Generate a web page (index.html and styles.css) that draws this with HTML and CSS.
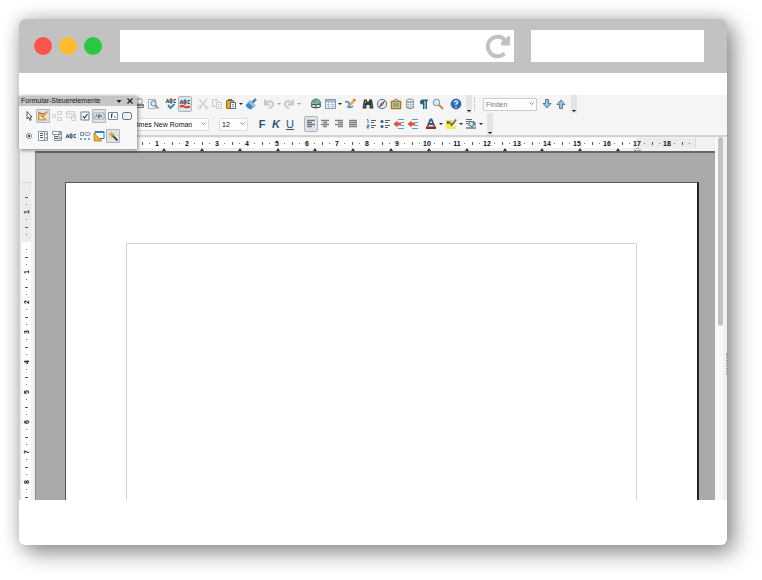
FILE: index.html
```html
<!DOCTYPE html>
<html lang="de">

<head>
    <meta charset="UTF-8">
    <meta name="viewport" content="width=device-width, initial-scale=1.0">
    <title>Formular-Steuerelemente</title>
    <link rel="stylesheet" href="styles.css">
</head>

<body>
    <div class="window">
        <header class="titlebar">
            <span class="light red"></span>
            <span class="light yellow"></span>
            <span class="light green"></span>
            <div class="address">
                <input type="text" class="address-input" aria-label="Adresse">
                <button class="reload" aria-label="Neu laden">
                    <svg width="26" height="26" viewBox="0 0 26 26"><path d="M19.600 20.400A9.800 9.800 0 1 1 19.500 6.500" fill="none" stroke="#c2c2c2" stroke-width="4"/><path d="M24.500 3.500V12H16.500V9L21 6L23 3.500Z" fill="#c2c2c2" stroke="#c2c2c2"/></svg>
                </button>
            </div>
            <input type="text" class="search-input" aria-label="Suche">
        </header>

        <main class="editor">
            <!-- standard toolbar -->
            <div class="toolbar standard">
                <button class="tool" aria-label="Drucken"><svg viewBox="0 0 12 12"><path d="M3 1h6v5H3z" fill="#fff" stroke="#999"/><path d="M1 6h10v4H1z" fill="#75838c"/><path d="M2 8h8v1H2z" fill="#cfe0ea"/><path d="M8 9h2v1H8z" fill="#4b9b58"/></svg></button>
                <button class="tool" aria-label="Seitenansicht"><svg viewBox="0 0 12 12"><path d="M1.500 1.500h7v9h-7z" fill="#fff" stroke="#a6adb3"/><circle cx="6.500" cy="5.500" r="2.700" fill="#d3e7f7" stroke="#4e7fa8"/><path d="M8.500 7.500l3 3" stroke="#b77b2b" stroke-width="1.500"/></svg></button>
                <span class="sep"></span>
                <button class="tool" aria-label="Rechtschreibung"><svg viewBox="0 0 12 12"><path d="M1 5l1.500-4L4 5M1.500 3.700h2M5 1v4h2V1H5m0 2h2M11 1.500H9v3h2" fill="none" stroke="#333e48" stroke-width=".9"/><path d="M3 7l2.500 3L9.500 6" fill="none" stroke="#3a85bb" stroke-width="2"/></svg></button>
                <button class="tool active" aria-label="Automatische Rechtschreibprüfung"><svg viewBox="0 0 12 12"><path d="M1 6l1.500-4L4 6M1.500 4.700h2M5 2v4h2V2H5m0 2h2M11 2.500H9v3h2" fill="none" stroke="#333e48" stroke-width=".9"/><path d="M1 9q2-2 4-.5t6 0" fill="none" stroke="#e03a28" stroke-width="2"/></svg></button>
                <span class="sep"></span>
                <button class="tool faded" aria-label="Ausschneiden"><svg viewBox="0 0 12 12"><path d="M2 1l7 8M10 1L3 9" stroke="#999" stroke-width="1.300"/><circle cx="2.500" cy="9.500" r="1.500" fill="none" stroke="#888"/><circle cx="9.500" cy="9.500" r="1.500" fill="none" stroke="#888"/></svg></button>
                <button class="tool faded" aria-label="Kopieren"><svg viewBox="0 0 12 12"><path d="M1.500 1.500h5v7h-5z" fill="#eee" stroke="#888"/><path d="M5.500 4.500h5v6h-5z" fill="#fff" stroke="#888"/><path d="M7 6.500h2M7 8.500h2" stroke="#888"/></svg></button>
                <button class="tool" aria-label="Einfügen"><svg viewBox="0 0 12 12"><path d="M1.500 2.500h7v8h-7z" fill="#e6a334" stroke="#a86d16"/><path d="M3 1h4v2H3z" fill="#626a70"/><path d="M5.500 4.500h5v6h-5z" fill="#fff" stroke="#536a7c"/><path d="M7 6.500h2M7 8.500h2" stroke="#7895a9"/></svg></button>
                <span class="drop"></span>
                <button class="tool" aria-label="Format übertragen"><svg viewBox="0 0 12 12"><path d="M11 1L7.500 4.500" stroke="#4682ae" stroke-width="2.500"/><path d="M5 2.500l5 5-2 2-5-5z" fill="#9fc7e2" stroke="#3972a3" stroke-width=".6"/><path d="M3.500 4.500l4.500 4.500-2 2.500Q2 10.500 .5 7z" fill="#3b8cc5"/></svg></button>
                <span class="sep"></span>
                <button class="tool faded" aria-label="Rückgängig"><svg viewBox="0 0 12 12"><path d="M2 1.500v5h5M2.500 6q2-3.500 6-2.500 3 2 .5 5l-3 2" fill="none" stroke="#888" stroke-width="2"/></svg></button>
                <span class="drop faded"></span>
                <button class="tool faded" aria-label="Wiederherstellen"><svg viewBox="0 0 12 12"><path d="M10 1.500v5H5M9.500 6q-2-3.500-6-2.500-3 2-.5 5l3 2" fill="none" stroke="#888" stroke-width="2"/></svg></button>
                <span class="drop faded"></span>
                <span class="sep wide"></span>
                <button class="tool" aria-label="Hyperlink"><svg viewBox="0 0 12 12"><circle cx="6" cy="5.500" r="4.500" fill="#8bbadb" stroke="#44687f"/><path d="M3 3l3-1.500 1 2-2 2-3-1zM7 4l3 0v3L8 8z" fill="#6da35b"/><rect x="1.500" y="6.500" width="5" height="3" rx="1.500" fill="#ddd" stroke="#48565e"/><rect x="5.500" y="6.500" width="5" height="3" rx="1.500" fill="#ddd" stroke="#48565e"/></svg></button>
                <button class="tool" aria-label="Tabelle"><svg viewBox="0 0 12 12"><path d="M1.500 1.500h10v9h-10z" fill="#fff" stroke="#8197a7"/><path d="M2 2h9v2H2z" fill="#a9bdcc"/><path d="M1 4.500h10M1 6.500h10M1 8.500h10M4.500 2v8M8.500 2v8" stroke="#a4b4c0" stroke-width=".7"/></svg></button>
                <span class="drop"></span>
                <button class="tool" aria-label="Zeichnen"><svg viewBox="0 0 12 12"><path d="M1 4q3-1 4 1t-1 4q3 1 5-1" fill="none" stroke="#4b91c5" stroke-width="1.700"/><path d="M10.500 2L6 7" stroke="#efa73a" stroke-width="2.500"/><path d="M11.500 2.500L9.500 1" stroke="#c44b37" stroke-width="1.500"/></svg></button>
                <span class="sep"></span>
                <button class="tool" aria-label="Suchen"><svg viewBox="0 0 12 12"><path d="M2 1.500h3v2h2v-2h3l1.500 9h-4V7h-3v3.500h-4z" fill="#343a3f"/><path d="M2 8h1M9 8h1M3.500 3v2" stroke="#9aa5ad"/></svg></button>
                <button class="tool" aria-label="Navigator"><svg viewBox="0 0 12 12"><circle cx="6" cy="6" r="4.600" fill="#e4eef6" stroke="#4c7292"/><path d="M9.500 2L7 7 5 5z" fill="#dc432e"/><path d="M2.500 10L5 5l2 2z" fill="#3c6285"/></svg></button>
                <button class="tool" aria-label="Galerie"><svg viewBox="0 0 12 12"><path d="M3 3l3-2 3 2" fill="none" stroke="#777"/><path d="M1.500 3.500h9v7h-9z" fill="#f2d98a" stroke="#b97320" stroke-width="1.500"/><path d="M3 5h6v4H3z" fill="#6fae9b"/></svg></button>
                <button class="tool" aria-label="Datenquellen"><svg viewBox="0 0 12 12"><path d="M2.500 2.500v7q3.500 2.500 7 0v-7z" fill="#bac0c4" stroke="#858d93"/><ellipse cx="6" cy="2.500" rx="3.500" ry="1.500" fill="#edf0f2" stroke="#858d93"/><path d="M2.500 5q3.500 2 7 0m-7 2.500q3.500 2 7 0" fill="none" stroke="#fff" stroke-width=".7"/></svg></button>
                <button class="tool" aria-label="Steuerzeichen"><svg viewBox="0 0 12 12"><path d="M4.500 6.500a2.500 2.500 0 0 1 0-5H10V3H9v8H7.500V3H6.500v8H5V6.500z" fill="#285e7e"/></svg></button>
                <button class="tool" aria-label="Maßstab"><svg viewBox="0 0 12 12"><circle cx="4.500" cy="4.500" r="3.300" fill="#d5e9f5" stroke="#6b93ad"/><path d="M7 7l4 4" stroke="#c28a42" stroke-width="2"/></svg></button>
                <span class="sep"></span>
                <button class="tool" aria-label="Hilfe"><svg viewBox="0 0 12 12"><circle cx="6" cy="6" r="5" fill="#286eb6" stroke="#1c5590" stroke-width=".6"/><path d="M4.300 4.500q0-1.700 1.700-1.700t1.700 1.500Q7.700 5.300 6 6v1M6 8.200v1.200" fill="none" stroke="#fff" stroke-width="1.300"/></svg></button>
                <span class="overflow"></span>
                <span class="grip"></span>
                <select class="combo find" aria-label="Suchtext"><option>Finden</option></select>
                <button class="tool next" aria-label="Weitersuchen"><svg viewBox="0 0 12 12"><path d="M4.500 1.500h3v4h2.500L6 10 2 5.500h2.500z" fill="#9bc1df" stroke="#42749b" stroke-width=".9"/></svg></button>
                <button class="tool" aria-label="Rückwärts suchen"><svg viewBox="0 0 12 12"><path d="M4.500 10.500h3v-4h2.500L6 2 2 6.500h2.500z" fill="#9bc1df" stroke="#42749b" stroke-width=".9"/></svg></button>
                <span class="overflow"></span>
            </div>

            <!-- formatting toolbar -->
            <div class="toolbar formatting">
                <select class="combo font-name" aria-label="Schriftart"><option>Times New Roman</option></select>
                <select class="combo font-size" aria-label="Schriftgröße"><option>12</option></select>
                <span class="sep"></span>
                <button class="tool letter bold">F</button>
                <button class="tool letter italic">K</button>
                <button class="tool letter underline">U</button>
                <span class="sep wide"></span>
                <button class="tool active" aria-label="Linksbündig"><svg viewBox="0 0 12 12"><path d="M2 2.500h8M2 4.500h5M2 6.500h8M2 8.500h5" stroke="#717b83" stroke-width="1.300"/></svg></button>
                <button class="tool" aria-label="Zentriert"><svg viewBox="0 0 12 12"><path d="M2 2.500h8M4 4.500h4M2 6.500h8M4 8.500h4" stroke="#7b838a" stroke-width="1.300"/></svg></button>
                <button class="tool" aria-label="Rechtsbündig"><svg viewBox="0 0 12 12"><path d="M2 2.500h8M5 4.500h5M2 6.500h8M5 8.500h5" stroke="#7b838a" stroke-width="1.300"/></svg></button>
                <button class="tool" aria-label="Blocksatz"><svg viewBox="0 0 12 12"><path d="M2 2.500h8M2 4.500h8M2 6.500h8M2 8.500h8" stroke="#7b838a" stroke-width="1.300"/></svg></button>
                <button class="tool list" aria-label="Nummerierung"><svg viewBox="0 0 12 12"><path d="M2 1.500h1V5M2 7h2v1.500H2V10h2" fill="none" stroke="#3e7197"/><path d="M6 2.500h5M6 4.500h3M6 7.500h5M6 9.500h3" stroke="#59636b"/></svg></button>
                <button class="tool" aria-label="Aufzählung"><svg viewBox="0 0 12 12"><circle cx="3" cy="3.500" r="1.500" fill="#315f83"/><circle cx="3" cy="8.500" r="1.500" fill="#315f83"/><path d="M6 2.500h5M6 4.500h3M6 7.500h5M6 9.500h3" stroke="#59636b"/></svg></button>
                <button class="tool" aria-label="Einzug verkleinern"><svg viewBox="0 0 12 12"><path d="M5 1.500h6M8 4.500h3M8 7.500h3M5 10.500h6" stroke="#5f9cc6"/><path d="M.5 6L4.500 2.500v2H8v3H4.500v2z" fill="#db5339"/></svg></button>
                <button class="tool" aria-label="Einzug vergrößern"><svg viewBox="0 0 12 12"><path d="M5 1.500h6M8 4.500h3M8 7.500h3M5 10.500h6" stroke="#5f9cc6"/><path d="M.5 6L4.500 2.500v2H8v3H4.500v2z" fill="#db5339"/></svg></button>
                <span class="sep"></span>
                <button class="tool" aria-label="Schriftfarbe"><svg viewBox="0 0 12 12"><path d="M2.500 8.500l3-7h1l3 7M4 6h4" fill="none" stroke="#315c7c" stroke-width="1.800"/><path d="M1 8.500h10v2.500H1z" fill="#9e2526"/></svg></button>
                <span class="drop"></span>
                <button class="tool" aria-label="Hervorhebung"><svg viewBox="0 0 12 12"><path d="M1 2h7v6h3v3H1z" fill="#f7e948"/><path d="M2 6l1-3 1 3M5 3v3h2" fill="none" stroke="#555"/><path d="M11 1.500L7 7" stroke="#647482" stroke-width="2"/><path d="M7 6.500L6 8" stroke="#333"/></svg></button>
                <span class="drop"></span>
                <button class="tool" aria-label="Absatzhintergrund"><svg viewBox="0 0 12 12"><path d="M1 1.500h6M1 3.500h3M1 5.500h2" stroke="#5b666f"/><path d="M5 3l4 2-1.500 4-4-2z" fill="#d4e2ec" stroke="#49667b"/><path d="M8 3q3 1 2 5" fill="none" stroke="#34546a"/><path d="M1 9h10v2H1z" fill="#8e979e"/></svg></button>
                <span class="drop"></span>
                <span class="overflow"></span>
            </div>

            <div class="workspace">
                <div class="document">
                    <div class="ruler">
                        <div class="ruler-track">
                            <div class="numbers">
                                <span>1</span><span>2</span><span>3</span><span>4</span><span>5</span><span>6</span>
                                <span>7</span><span>8</span><span>9</span><span>10</span><span>11</span><span>12</span>
                                <span>13</span><span>14</span><span>15</span><span>16</span><span>17</span><span>18</span>
                                <span></span>
                            </div>
                        </div>
                        <!-- default tab stops -->
                        <svg class="tabs" width="520" height="3" viewBox="0 0 520 3"><path d="M20 3l2-3 2 3zM58 3l2-3 2 3zM96 3l2-3 2 3zM134 3l2-3 2 3zM171 3l2-3 2 3zM209 3l2-3 2 3zM247 3l2-3 2 3zM285 3l2-3 2 3zM323 3l2-3 2 3zM361 3l2-3 2 3zM398 3l2-3 2 3zM436 3l2-3 2 3zM474 3l2-3 2 3z" fill="#333"/><path d="M492 2.500l2-2h3l2 2z" fill="#fff" stroke="#aaa"/></svg>
                    </div>
                    <div class="view">
                        <div class="side-ruler">
                            <div class="side-track">
                                <span>1</span><span></span><span>1</span><span>2</span><span>3</span><span>4</span>
                                <span>5</span><span>6</span><span>7</span><span>8</span><span></span>
                            </div>
                        </div>
                        <div class="canvas">
                            <div class="page">
                                <div class="text-area"></div>
                            </div>
                        </div>
                    </div>
                </div>
                <div class="scroll">
                    <div class="thumb"></div>
                    <div class="handle"></div>
                </div>
            </div>

            <!-- floating form controls toolbar -->
            <section class="palette">
                <div class="palette-title">
                    <span class="palette-name">Formular-Steuerelemente</span>
                    <button class="mini" aria-label="Menü"><svg viewBox="0 0 8 8"><path d="M1.500 3h5L4 6z" fill="#222"/></svg></button>
                    <button class="mini" aria-label="Schließen"><svg viewBox="0 0 8 8"><path d="M1.500 1.500l5 5m0-5l-5 5" stroke="#222" stroke-width="1.200"/></svg></button>
                </div>
                <div class="palette-tools">
                    <button class="tool" aria-label="Auswahl"><svg viewBox="0 0 12 12"><path d="M4 1.500v7.500l1.800-1.700L7 10.500l1.200-.6L7 7h2z" fill="#fff" stroke="#444" stroke-width=".9"/></svg></button>
                    <button class="tool active" aria-label="Entwurfsmodus"><svg viewBox="0 0 12 12"><path d="M1.500 2.500v7.500h8z" fill="#f6c65a" stroke="#b9802c" stroke-width=".8"/><path d="M3 6.500V9h2.500z" fill="#fff"/><path d="M10.500 1.500L5 7" stroke="#e88328" stroke-width="1.700"/><path d="M2 2l3 2 2-1" fill="none" stroke="#a94b35"/></svg></button>
                    <button class="tool faded" aria-label="Kontrollfeld"><svg viewBox="0 0 12 12"><path d="M6.500 1.500h4v3h-4zM1.500 4.500h3v3h-3zM6.500 7.500h4v3h-4z" fill="#eee" stroke="#999"/></svg></button>
                    <button class="tool faded" aria-label="Formular"><svg viewBox="0 0 12 12"><path d="M1.500 1.500h8v6h-8zM6.500 5.500h4v5h-4z" fill="#eee" stroke="#999"/><path d="M2 3.500h7" stroke="#999"/></svg></button>
                    <button class="tool" aria-label="Markierfeld"><svg viewBox="0 0 12 12"><path d="M2 2h8v8H2z" fill="#fff" stroke="#627c90"/><path d="M4 6l1.500 2L8.500 4" fill="none" stroke="#24384a" stroke-width="1.200"/></svg></button>
                    <button class="tool active" aria-label="Textfeld"><svg viewBox="0 0 12 12"><path d="M1 3h10v6H1z" fill="#fff" stroke="#8fa5b5"/><path d="M2.500 7.500l1-3 1 3M5.500 4.500v3h1.300v-3H5.500m0 1.500h1.300M9.500 5H8v2h1.500" fill="none" stroke="#303e49" stroke-width=".7"/></svg></button>
                    <button class="tool" aria-label="Formatiertes Feld"><svg viewBox="0 0 12 12"><path d="M1.500 2.500h9v7h-9z" fill="#fff" stroke="#7b8d99"/><path d="M6 4H4.500v4M4 6h1.500M7 7h1.500" fill="none" stroke="#33414b"/></svg></button>
                    <button class="tool" aria-label="Schaltfläche"><svg viewBox="0 0 12 12"><rect x="1.500" y="2.500" width="9" height="7" rx="2" fill="#e8f0f6" stroke="#60717e"/></svg></button>
                    <button class="tool" aria-label="Optionsfeld"><svg viewBox="0 0 12 12"><circle cx="6" cy="6" r="2.700" fill="#fff" stroke="#6c879b" stroke-width=".8"/><circle cx="6" cy="6" r="1.300" fill="#263d50"/></svg></button>
                    <button class="tool" aria-label="Listenfeld"><svg viewBox="0 0 12 12"><path d="M1.500 1.500h9v9h-9zM7.500 2v8" fill="#fff" stroke="#8b969e"/><path d="M3 3.500h3M3 5.500h3M3 7.500h3M8.500 4h1.500M8.500 8h1.500" stroke="#405a6f"/></svg></button>
                    <button class="tool" aria-label="Kombinationsfeld"><svg viewBox="0 0 12 12"><path d="M1.500 1.500h9v3h-9zM3.500 4.500h7v6h-7zM8 2v8" fill="#fff" stroke="#8b969e"/><path d="M4 6.500h3M4 8.500h3M8.500 3h1.500M8.500 8h1.500" stroke="#405a6f"/></svg></button>
                    <button class="tool" aria-label="Beschriftungsfeld"><svg viewBox="0 0 12 12"><path d="M1 8l1.500-4L4 8M1.500 7h2M5 4v4h2V4H5m0 2h2M11 4.500H9v3h2" fill="none" stroke="#2f5673"/></svg></button>
                    <button class="tool" aria-label="Weitere Steuerelemente"><svg viewBox="0 0 12 12"><path d="M1.500 2.500h3v3h-3z" fill="#eee" stroke="#7d8b96"/><rect x="6" y="2.500" width="5" height="3" rx="1.500" fill="#eee" stroke="#7d8b96"/><path d="M1 9h2M5 9h2M9 9h2" stroke="#3a8ad0" stroke-width="1.600"/></svg></button>
                    <button class="tool" aria-label="Formular-Entwurf"><svg viewBox="0 0 12 12"><path d="M2 1.500h9v7H2z" fill="#fff" stroke="#3a78a9"/><path d="M2 1h9v2H2z" fill="#3c83bc"/><path d="M1 3v8h8z" fill="#f1ac2e" stroke="#b47a24" stroke-width=".7"/><path d="M3 8v1h1z" fill="#fff"/></svg></button>
                    <button class="tool active" aria-label="Assistenten"><svg viewBox="0 0 12 12"><path d="M5 5l5.500 5.500" stroke="#3b4248" stroke-width="1.800"/><path d="M4.500 1.500v6M1.500 4.500h6M2.500 2.500l4 4M6.500 2.500l-4 4" stroke="#e3a432" stroke-width=".9"/><path d="M8 2h1M10 5h1" stroke="#e7b75a"/></svg></button>
                </div>
            </section>
        </main>
    </div>
</body>

</html>
```
FILE: styles.css
```css
* {
    box-sizing: border-box;
}

body {
    display: flex;
    min-height: 100vh;
    margin: 0;
    padding: 19px 35px 35px 19px;
    background-color: #fff;
    font-family: "Liberation Sans", Arial, sans-serif;
    font-size: 7px;
    line-height: 8px;
    color: #111;
}

button,
input,
select {
    margin: 0;
    padding: 0;
    border: none;
    background: none;
    font: inherit;
    color: inherit;
}

.window {
    display: flex;
    flex: 1;
    flex-direction: column;
    min-width: 0;
    padding-bottom: 45px;
    border-radius: 6px;
    background-color: #fff;
    box-shadow: 0 0 18px rgba(0, 0, 0, 0.2), 7px 8px 22px rgba(0, 0, 0, 0.4);
}

/* browser frame */

.titlebar {
    display: flex;
    align-items: center;
    gap: 7px;
    height: 54px;
    margin-bottom: 22px;
    padding: 0 23px 0 15px;
    border-radius: 6px 6px 0 0;
    background-color: #c2c2c2;
}

.light {
    width: 18px;
    height: 18px;
    border-radius: 50%;
}

.red {
    background-color: #ff544d;
}

.yellow {
    background-color: #ffbd2e;
}

.green {
    background-color: #28c940;
}

.address {
    display: flex;
    flex: 1;
    align-items: center;
    height: 32px;
    margin: 0 10px 0 11px;
    padding-right: 3px;
    background-color: #fff;
}

.address-input {
    flex: 1;
    height: 32px;
    font-size: 14px;
}

.reload {
    width: 26px;
    height: 26px;
}

.search-input {
    width: 173px;
    height: 32px;
    background-color: #fff;
    font-size: 14px;
}

/* toolbars */

.editor {
    position: relative;
    display: flex;
    flex: 1;
    flex-direction: column;
}

.toolbar {
    display: flex;
    align-items: center;
    gap: 2px;
    background-color: #f5f5f5;
}

.standard {
    height: 18px;
    padding-left: 114px;
}

.formatting {
    height: 22px;
    padding-left: 104px;
}

.tool {
    display: flex;
    flex: none;
    align-items: center;
    justify-content: center;
    width: 12px;
    height: 14px;
}

.tool svg {
    flex: none;
    width: 12px;
    height: 12px;
}

.active {
    border-radius: 1px;
    background-color: #dfe4ea;
    outline: 1px solid #adb5bd;
}

.faded {
    opacity: 0.4;
}

.letter {
    font-size: 11px;
    line-height: 14px;
    color: #2c5470;
}

.bold {
    font-weight: bold;
}

.italic {
    font-style: italic;
    font-weight: bold;
}

.underline {
    text-decoration: underline;
}

.sep {
    width: 2px;
}

.wide {
    width: 5px;
}

.list {
    margin-left: 4px;
}

.drop {
    border: 2px solid transparent;
    border-top-color: #222;
    border-bottom: none;
}

.overflow {
    position: relative;
    align-self: stretch;
    width: 6px;
    margin-left: 2px;
    background-color: #e4e4e4;
}

.overflow::after {
    content: "";
    position: absolute;
    left: 1px;
    bottom: 1px;
    border: 2px solid transparent;
    border-top-color: #111;
    border-bottom: none;
}

.grip {
    width: 3px;
    height: 14px;
    margin-right: 4px;
    border-left: 1px dotted #bbb;
}

.combo {
    appearance: none;
    height: 13px;
    padding: 0 2px;
    border: 1px solid #ddd;
    border-radius: 1px;
    background: #fff url("data:image/svg+xml,%3Csvg xmlns='http://www.w3.org/2000/svg' width='5' height='4'%3E%3Cpath d='M.5.5l2 2 2-2' fill='none' stroke='%23888'/%3E%3C/svg%3E") right 2px center no-repeat;
    line-height: 11px;
}

.find {
    width: 54px;
    border-color: #ccc;
    color: #777;
}

.next {
    margin-left: 2px;
}

.font-name {
    width: 86px;
    margin-right: 8px;
    padding-left: 9px;
}

.font-size {
    width: 29px;
    margin-right: 2px;
}

/* document view */

.workspace {
    display: flex;
    flex: 1;
    border-top: 2px solid #d2d2d2;
}

.document {
    display: flex;
    flex: 1;
    flex-direction: column;
    min-width: 0;
}

.ruler {
    height: 14px;
    padding: 1px 19px 0 108px;
    background-color: #f1f1f1;
}

.ruler-track {
    height: 10px;
    padding-left: 15px;
    overflow: hidden;
    background: linear-gradient(#ececec, #ececec) right / 60px 100% no-repeat #fff;
    box-shadow: inset -1px 0 #d8d8d8;
}

.numbers {
    display: flex;
    font-weight: bold;
}

.numbers span {
    flex: none;
    width: 30px;
    height: 10px;
    line-height: 11px;
    text-align: center;
    background:
        linear-gradient(#555, #555) 0 4px / 1px 3px no-repeat,
        linear-gradient(#777, #777) 7px 5px / 1px 1px no-repeat,
        linear-gradient(#777, #777) 22px 5px / 1px 1px no-repeat;
}

.tabs {
    display: block;
    margin-left: 15px;
}

.view {
    display: flex;
    flex: 1;
}

.side-ruler {
    width: 16px;
    padding: 31px 4px 0 2px;
    border-left: 1px solid #ccc;
    background-color: #f0f0f0;
}

.side-track {
    height: 318px;
    padding-top: 15px;
    overflow: hidden;
    background: linear-gradient(#ececec, #ececec) top / 100% 60px no-repeat #fff;
    box-shadow: inset 0 1px #d8d8d8;
    font-weight: bold;
}

.side-track span {
    display: block;
    width: 9px;
    height: 30px;
    line-height: 9px;
    text-align: center;
    writing-mode: vertical-rl;
    transform: rotate(180deg);
    background:
        linear-gradient(#555, #555) 3px 29px / 3px 1px no-repeat,
        linear-gradient(#777, #777) 4px 7px / 1px 1px no-repeat,
        linear-gradient(#777, #777) 4px 22px / 1px 1px no-repeat;
}

.canvas {
    display: flex;
    flex: 1;
    padding: 29px 16px 0 29px;
    border-top: 2px solid #686868;
    border-left: 1px solid #888;
    background-color: #a9a9a9;
}

.page {
    display: flex;
    flex: 1;
    padding: 60px 60px 0 60px;
    border: 1px solid #555;
    border-right: 2px solid #222;
    border-bottom: none;
    background-color: #fff;
}

.text-area {
    flex: 1;
    border: 1px solid #d2d2d2;
    border-bottom: none;
}

.scroll {
    display: flex;
    flex-direction: column;
    width: 12px;
    padding-left: 3px;
    background: linear-gradient(#f1f1f1, #f1f1f1) right / 4px 100% no-repeat #f9f9f9;
}

.thumb {
    width: 5px;
    height: 52%;
    border-radius: 3px;
    background-color: #c2c2c2;
}

.handle {
    align-self: flex-end;
    height: 22px;
    margin-top: 27px;
    border-right: 1px dotted #999;
}

/* form controls */

.palette {
    position: absolute;
    top: 1px;
    left: 0;
    width: 118px;
    height: 53px;
    background-color: #f7f7f7;
    box-shadow: 1px 1px 4px rgba(0, 0, 0, 0.5);
}

.palette-title {
    display: flex;
    align-items: center;
    gap: 3px;
    height: 10px;
    padding: 0 3px 0 2px;
    background-color: #c6c6c6;
}

.palette-name {
    flex: 1;
}

.mini {
    width: 8px;
    height: 8px;
}

.mini svg {
    display: block;
}

.palette-tools {
    display: grid;
    grid-template-columns: repeat(8, 14px);
    grid-auto-rows: 20px;
    align-items: center;
    padding-left: 3px;
}

.palette-tools .tool {
    width: 14px;
}

.palette-tools .active {
    outline-offset: -1px;
}
```
